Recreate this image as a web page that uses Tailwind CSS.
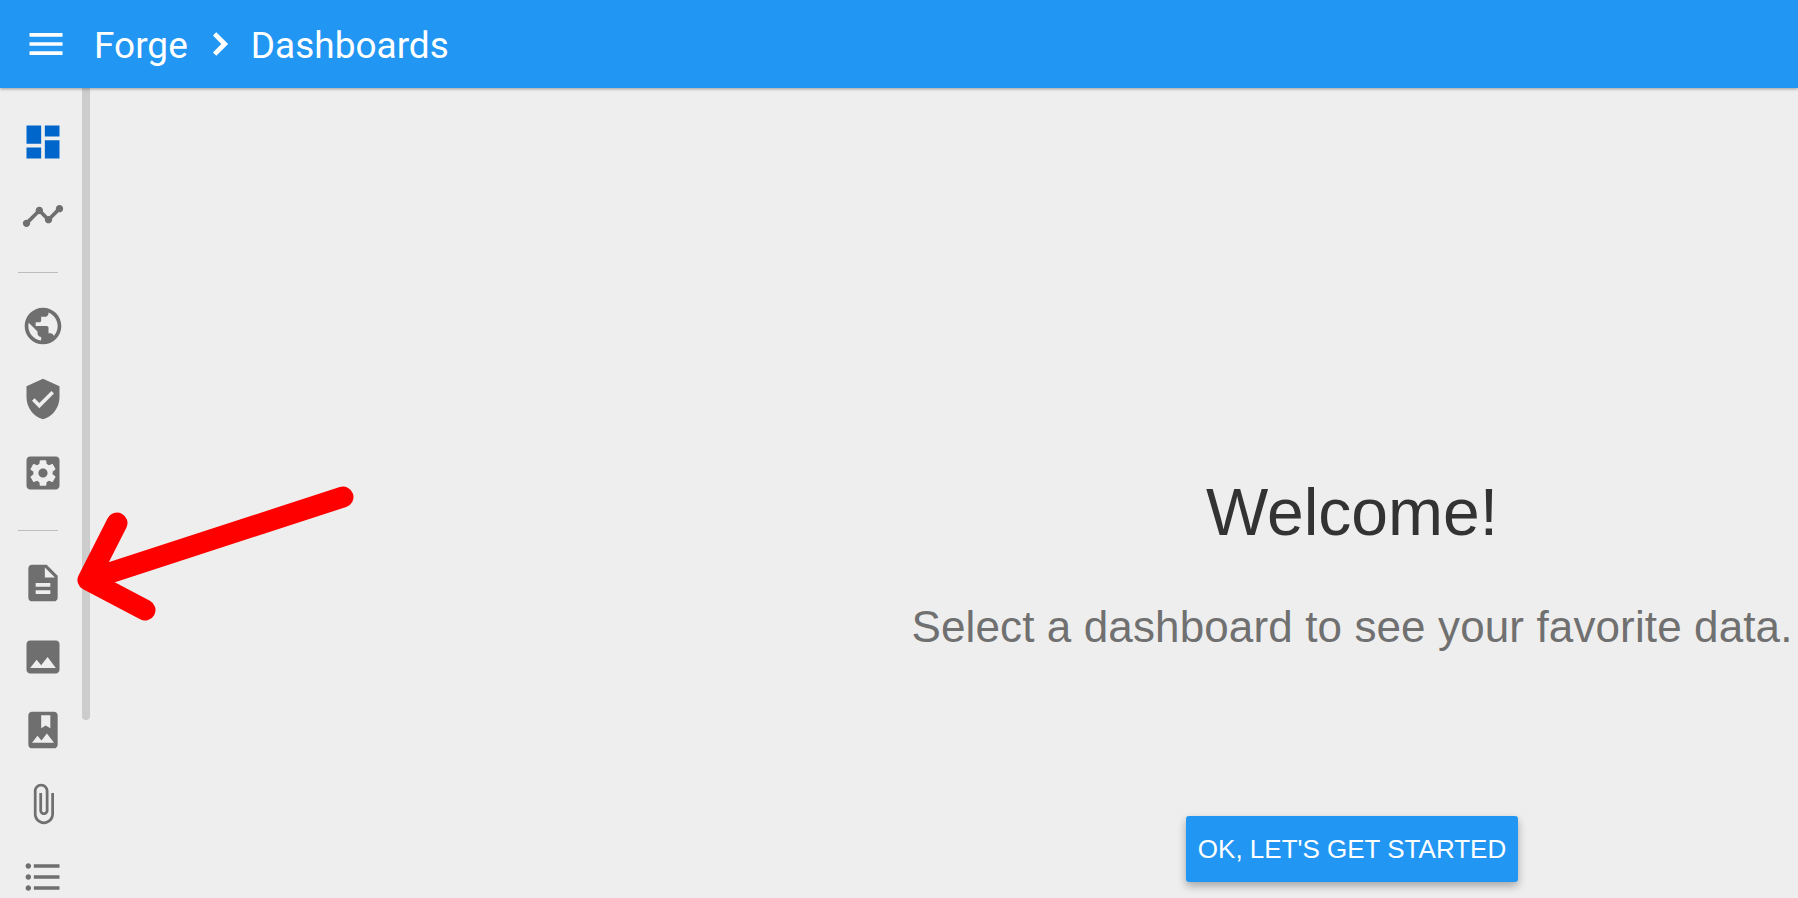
<!DOCTYPE html>
<html lang="en">
<head>
    <meta charset="UTF-8">
    <meta name="viewport" content="width=device-width, initial-scale=1.0">
    <script src="https://cdn.jsdelivr.net/npm/@tailwindcss/browser@4"></script>
    <title>Forge - Dashboards</title>
</head>
<body class="h-[898px] overflow-hidden bg-[#eeeeee]">
    <!-- Top bar -->
    <header class="relative z-10 flex h-[88px] items-center bg-[#2196f3] pl-6 text-white shadow-[0_1px_3px_rgba(0,0,0,0.35)]">
        <svg class="h-11 w-11 fill-white" viewBox="0 0 24 24"><path d="M3 18h18v-2H3v2zm0-5h18v-2H3v2zm0-7v2h18V6H3z"/></svg>
        <span class="mt-[2px] ml-[26px] font-['Roboto',sans-serif] text-[37px] leading-none font-normal">Forge</span>
        <svg class="ml-[10px] h-11 w-11 fill-white stroke-white stroke-[0.6]" viewBox="0 0 24 24"><path d="M10 6L8.59 7.41 13.17 12l-4.58 4.59L10 18l6-6z"/></svg>
        <span class="mt-[2px] ml-[9px] font-['Roboto',sans-serif] text-[37px] leading-none font-normal">Dashboards</span>
    </header>

    <div class="flex h-[810px]">
        <!-- Sidebar icons -->
        <nav class="w-[82px] shrink-0 pt-[17px] pl-[3px]">
            <div class="flex h-[73.5px] items-center justify-center"><svg class="h-11 w-11 fill-[#0066cc]" viewBox="0 0 24 24"><path d="M3 13h8V3H3v10zm0 8h8v-6H3v6zm10 0h8V11h-8v10zm0-18v6h8V3h-8z"/></svg></div>
            <div class="flex h-[73.5px] items-center justify-center"><svg class="mt-[2px] h-11 w-11 fill-[#6f6f6f]" viewBox="0 0 24 24"><path d="M23 8c0 1.1-.9 2-2 2-.18 0-.35-.02-.51-.07l-3.56 3.55c.05.16.07.34.07.52 0 1.1-.9 2-2 2s-2-.9-2-2c0-.18.02-.36.07-.52l-2.55-2.55c-.16.05-.34.07-.52.07s-.36-.02-.52-.07l-4.55 4.56c.05.16.07.33.07.51 0 1.1-.9 2-2 2s-2-.9-2-2 .9-2 2-2c.18 0 .35.02.51.07l4.56-4.55C8.02 9.36 8 9.18 8 9c0-1.1.9-2 2-2s2 .9 2 2c0 .18-.02.36-.07.52l2.55 2.55c.16-.05.34-.07.52-.07s.36.02.52.07l3.55-3.56C19.02 8.35 19 8.18 19 8c0-1.1.9-2 2-2s2 .9 2 2z"/></svg></div>
            <div class="h-[37px] pt-[20px] pl-[15px]"><div class="h-px w-10 bg-[#bdbdbd]"></div></div>
            <div class="flex h-[73.5px] items-center justify-center"><svg class="h-11 w-11 fill-[#6f6f6f]" viewBox="0 0 24 24"><path d="M12 2C6.48 2 2 6.48 2 12s4.48 10 10 10 10-4.48 10-10S17.52 2 12 2zm-1 17.93c-3.95-.49-7-3.85-7-7.93 0-.62.08-1.21.21-1.79L9 15v1c0 1.1.9 2 2 2v1.93zm6.9-2.54c-.26-.81-1-1.39-1.9-1.39h-1v-3c0-.55-.45-1-1-1H8v-2h2c.55 0 1-.45 1-1V7h2c1.1 0 2-.9 2-2v-.41c2.93 1.19 5 4.06 5 7.41 0 2.08-.8 3.97-2.1 5.39z"/></svg></div>
            <div class="flex h-[73.5px] items-center justify-center"><svg class="h-11 w-11 fill-[#6f6f6f]" viewBox="0 0 24 24"><path d="M12 1L3 5v6c0 5.55 3.84 10.74 9 12 5.16-1.26 9-6.45 9-12V5l-9-4zm-2 16l-4-4 1.41-1.41L10 14.17l6.59-6.59L18 9l-8 8z"/></svg></div>
            <div class="flex h-[73.5px] items-center justify-center"><svg class="h-11 w-11 fill-[#6f6f6f]" viewBox="0 0 24 24"><path d="M19 3H5c-1.11 0-2 .89-2 2v14c0 1.1.89 2 2 2h14c1.11 0 2-.9 2-2V5c0-1.11-.89-2-2-2zm-1.75 9c0 .23-.02.46-.05.68l1.48 1.16c.13.11.17.3.08.45l-1.4 2.42c-.09.15-.27.21-.43.15l-1.74-.7c-.36.28-.76.51-1.18.69l-.26 1.85c-.03.17-.18.3-.35.3h-2.8c-.17 0-.32-.13-.35-.29l-.26-1.85c-.43-.18-.82-.41-1.18-.69l-1.74.7c-.16.06-.34 0-.43-.15l-1.4-2.42c-.09-.15-.05-.34.08-.45l1.48-1.16c-.03-.23-.05-.46-.05-.69 0-.23.02-.46.05-.68l-1.48-1.16c-.13-.11-.17-.3-.08-.45l1.4-2.42c.09-.15.27-.21.43-.15l1.74.7c.36-.28.76-.51 1.18-.69l.26-1.85c.03-.17.18-.3.35-.3h2.8c.17 0 .32.13.35.29l.26 1.85c.43.18.82.41 1.18.69l1.74-.7c.16-.06.34 0 .43.15l1.4 2.42c.09.15.05.34-.08.45l-1.48 1.16c.03.23.05.46.05.69zM12 9.5c-1.38 0-2.5 1.12-2.5 2.5s1.12 2.5 2.5 2.5 2.5-1.12 2.5-2.5-1.12-2.5-2.5-2.5z"/></svg></div>
            <div class="h-[37px] pt-[20px] pl-[15px]"><div class="h-px w-10 bg-[#bdbdbd]"></div></div>
            <div class="flex h-[73.5px] items-center justify-center"><svg class="h-11 w-11 fill-[#6f6f6f]" viewBox="0 0 24 24"><path d="M14 2H6c-1.1 0-1.99.9-1.99 2L4 20c0 1.1.89 2 1.99 2H18c1.1 0 2-.9 2-2V8l-6-6zm2 16H8v-2h8v2zm0-4H8v-2h8v2zm-3-5V3.5L18.5 9H13z"/></svg></div>
            <div class="flex h-[73.5px] items-center justify-center"><svg class="h-11 w-11 fill-[#6f6f6f]" viewBox="0 0 24 24"><path d="M21 19V5c0-1.1-.9-2-2-2H5c-1.1 0-2 .9-2 2v14c0 1.1.9 2 2 2h14c1.1 0 2-.9 2-2zM8.5 13.5l2.5 3.01L14.5 12l4.5 6H5l3.5-4.5z"/></svg></div>
            <div class="flex h-[73.5px] items-center justify-center"><svg class="h-11 w-11 fill-[#6f6f6f]" viewBox="0 0 24 24"><path d="M18 2H6c-1.1 0-2 .9-2 2v16c0 1.1.9 2 2 2h12c1.1 0 2-.9 2-2V4c0-1.1-.9-2-2-2zM11 4h5v7l-2.5-1.5L11 11V4zM6 19l3-3.86 2.14 2.58 3-3.86L18 19H6z"/></svg></div>
            <div class="flex h-[73.5px] items-center justify-center"><svg class="h-11 w-11 fill-[#6f6f6f]" viewBox="0 0 24 24"><path d="M16.5 6v11.5c0 2.21-1.79 4-4 4s-4-1.79-4-4V5c0-1.38 1.12-2.5 2.5-2.5s2.5 1.12 2.5 2.5v10.5c0 .55-.45 1-1 1s-1-.45-1-1V6H10v9.5c0 1.38 1.12 2.5 2.5 2.5s2.5-1.12 2.5-2.5V5c0-2.21-1.79-4-4-4S7 2.79 7 5v12.5c0 3.04 2.46 5.5 5.5 5.5s5.5-2.46 5.5-5.5V6h-1.5z"/></svg></div>
            <div class="flex h-[73.5px] items-center justify-center"><svg class="h-11 w-11 fill-[#6f6f6f]" viewBox="0 0 24 24"><path d="M4 10.5c-.83 0-1.5.67-1.5 1.5s.67 1.5 1.5 1.5 1.5-.67 1.5-1.5-.67-1.5-1.5-1.5zm0-6c-.83 0-1.5.67-1.5 1.5S3.17 7.5 4 7.5 5.5 6.83 5.5 6 4.83 4.5 4 4.5zm0 12c-.83 0-1.5.68-1.5 1.5s.68 1.5 1.5 1.5 1.5-.68 1.5-1.5-.67-1.5-1.5-1.5zM7 19h14v-2H7v2zm0-6h14v-2H7v2zm0-8v2h14V5H7z"/></svg></div>
        </nav>

        <!-- Scrollbar thumb -->
        <div class="h-[632px] w-2 shrink-0 rounded-b-full bg-[#cccccc]"></div>

        <!-- Welcome panel -->
        <main class="ml-auto flex w-[892px] flex-col items-center pt-[386px] text-center">
            <h1 class="font-['Liberation_Sans',Arial,sans-serif] text-[66px] leading-[76px] font-normal text-[#333333]">Welcome!</h1>
            <p class="mt-[52px] font-['Liberation_Sans',Arial,sans-serif] text-[44px] leading-[50px] tracking-[0.12px] whitespace-nowrap text-[#707070]">Select a dashboard to see your favorite data.</p>
            <button class="mt-[164px] h-[66px] w-[332px] rounded-[3px] bg-[#2196f3] font-['Liberation_Sans',Arial,sans-serif] text-[26px] whitespace-nowrap text-white shadow-[0_4px_8px_rgba(0,0,0,0.3)]">OK, LET'S GET STARTED</button>
        </main>
    </div>

    <!-- Red annotation arrow -->
    <svg class="absolute top-0 left-0 z-20 h-[898px] w-[1798px]" viewBox="0 0 1798 898" fill="none"><path d="M343 497L88 580M117 523L88 580L145 610" stroke="#ff0000" stroke-width="21" stroke-linecap="round" stroke-linejoin="round"/></svg>
</body>
</html>
